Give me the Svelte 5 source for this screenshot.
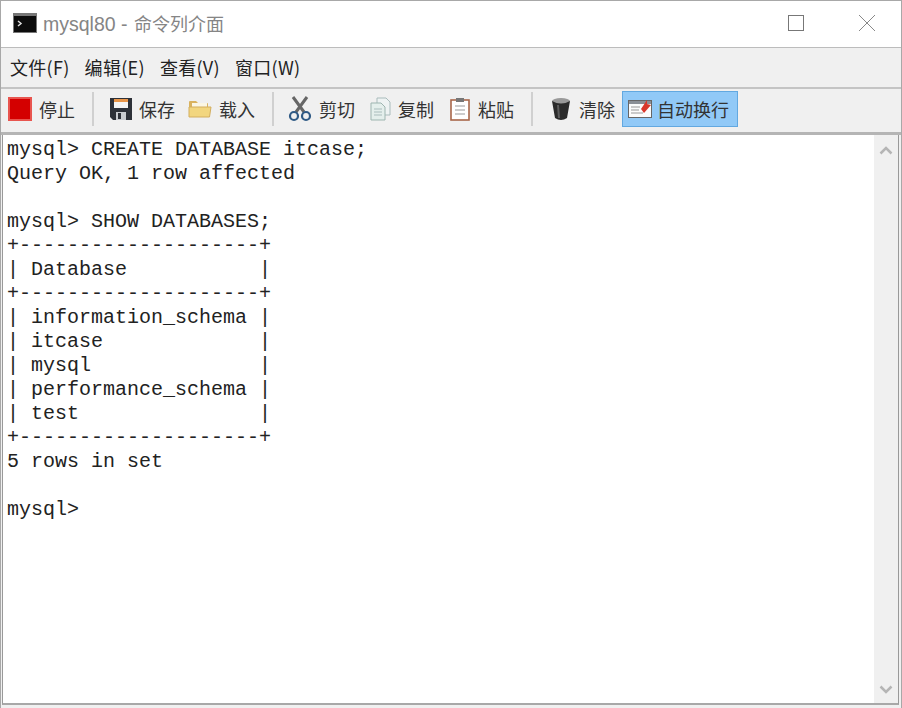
<script lang="ts">
	const menus = ['文件(F)', '编辑(E)', '查看(V)', '窗口(W)'];
	const lines = [
		'mysql> CREATE DATABASE itcase;',
		'Query OK, 1 row affected',
		'',
		'mysql> SHOW DATABASES;',
		'+--------------------+',
		'| Database           |',
		'+--------------------+',
		'| information_schema |',
		'| itcase             |',
		'| mysql              |',
		'| performance_schema |',
		'| test               |',
		'+--------------------+',
		'5 rows in set',
		'',
		'mysql> '
	];
</script>

<div class="window">
	<header class="titlebar">
		<svg class="term" width="24" height="20" viewBox="0 0 24 20">
			<rect width="24" height="20" fill="#777" />
			<rect x="1" y="3" width="22" height="16" fill="#0c0c0c" />
			<path d="M5 8l3 2.500-3 2.500" fill="none" stroke="#ddd" stroke-width="1.500" />
		</svg>
		<span class="title">mysql80 - <span class="cjk">命令列介面</span></span>
		<div class="controls">
			<svg width="16" height="16" viewBox="0 0 16 16"><rect x="0.500" y="0.500" width="15" height="15" fill="none" stroke="#777" /></svg>
			<svg width="16" height="16" viewBox="0 0 16 16"><path d="M0 0l16 16M16 0L0 16" stroke="#888" fill="none" /></svg>
		</div>
	</header>

	<nav class="menubar">
		{#each menus as m}
			<span>{m}</span>
		{/each}
	</nav>

	<div class="toolbar">
		<button class="tool stop">
			<svg width="24" height="24" viewBox="0 0 24 24"><rect x="1" y="1" width="22" height="22" fill="#d40000" stroke="#e8554f" stroke-width="2" /></svg>
			停止
		</button>
		<i class="sep"></i>
		<button class="tool save">
			<svg width="22" height="22" viewBox="0 0 22 22">
				<path d="M0 0h22v22H3l-3-3z" fill="#2d3138" />
				<rect x="4" y="1" width="14" height="3" fill="#e8964a" />
				<rect x="4" y="4" width="14" height="6" fill="#f4f4f4" />
				<rect x="6" y="14" width="10" height="8" fill="#c9ccd0" />
				<rect x="8" y="15" width="3" height="6" fill="#2d3138" />
			</svg>
			保存
		</button>
		<button class="tool load">
			<svg width="24" height="20" viewBox="0 0 24 20">
				<path d="M1 18V3q0-1 1-1h6l2 2h9q1 0 1 1v13z" fill="#d9b25f" />
				<path d="M4 4h15v4H4z" fill="#fbf6e4" />
				<path d="M1 18V8h22l-1.500 10z" fill="#f2d67f" stroke="#d3ae5f" />
			</svg>
			载入
		</button>
		<i class="sep"></i>
		<button class="tool cut">
			<svg width="24" height="26" viewBox="0 0 24 26">
				<path d="M19 1L8 16M5 1l11 15" stroke="#666" stroke-width="3" fill="none" />
				<circle cx="6" cy="20" r="4" fill="none" stroke="#2f5a85" stroke-width="2.200" />
				<circle cx="18" cy="20" r="4" fill="none" stroke="#2f5a85" stroke-width="2.200" />
			</svg>
			剪切
		</button>
		<button class="tool copy">
			<svg width="22" height="24" viewBox="0 0 22 24">
				<path d="M7 1h9l4 4v13H7z" fill="#eef3f3" stroke="#a9bcbc" />
				<path d="M1 6h10l4 4v13H1z" fill="#e4efec" stroke="#9db5b0" />
				<path d="M4 12h8M4 15h8M4 18h8" stroke="#a9bcbc" />
			</svg>
			复制
		</button>
		<button class="tool paste">
			<svg width="20" height="24" viewBox="0 0 20 24">
				<rect x="1" y="3" width="18" height="20" fill="#fff" stroke="#a8674a" stroke-width="1.600" />
				<rect x="6" y="1" width="8" height="4" fill="#777" />
				<path d="M5 9h10M5 13h10M5 17h10" stroke="#999" />
			</svg>
			粘贴
		</button>
		<i class="sep"></i>
		<button class="tool clear">
			<svg width="20" height="24" viewBox="0 0 20 24">
				<ellipse cx="10" cy="4" rx="9" ry="3" fill="#999" />
				<path d="M1 4q9 5 18 0l-3 17q-6 4-12 0z" fill="#2b2b2b" />
				<path d="M7 8l1 13" stroke="#5c5c5c" stroke-width="2" />
			</svg>
			清除
		</button>
		<button class="tool active">
			<svg width="24" height="20" viewBox="0 0 24 20">
				<rect x="0.500" y="1.500" width="23" height="17" fill="#fbfbfb" stroke="#666" />
				<rect x="1" y="2" width="22" height="3" fill="#8a8f96" />
				<path d="M3 8h9M3 11h8M3 14h12" stroke="#999" />
				<path d="M13 10l6-9v4l4 1-7 8z" fill="#d8372b" />
			</svg>
			自动换行
		</button>
	</div>

	<div class="console">
		<pre>{lines.join('\n')}</pre>
		<div class="scrollbar">
			<svg width="14" height="9" viewBox="0 0 14 9"><path d="M1.500 7.500L7 2l5.500 5.500" fill="none" stroke="#b5b5b5" stroke-width="2.500" /></svg>
			<svg width="14" height="9" viewBox="0 0 14 9"><path d="M1.500 1.500L7 7l5.500-5.500" fill="none" stroke="#b5b5b5" stroke-width="2.500" /></svg>
		</div>
	</div>
</div>

<style>
	:global(body) {
		margin: 0;
	}

	.window {
		width: 902px;
		height: 708px;
		display: flex;
		flex-direction: column;
		box-sizing: border-box;
		background: #f0f0f0;
		border-left: 1px solid #a8a8a8;
		border-right: 1px solid #a8a8a8;
		border-top: 1px solid #a8a8a8;
		font-family: "Noto Sans CJK SC", "Liberation Sans", sans-serif;
		color: #222;
		overflow: hidden;
	}

	.titlebar {
		height: 47px;
		box-sizing: border-box;
		flex: none;
		display: flex;
		align-items: center;
		background: #fff;
		padding-left: 12px;
		gap: 6px;
		border-bottom: 1px solid #bcbcbc;
	}

	.term {
		margin-top: -3px;
	}

	.title {
		font-family: "Liberation Sans", "Noto Sans CJK SC", sans-serif;
		font-size: 19.500px;
		color: #858585;
		margin-top: -2px;
	}

	.cjk {
		font-size: 18px;
		margin-left: 1px;
	}

	.controls {
		margin-left: auto;
		display: flex;
		align-items: center;
		gap: 55px;
		padding-right: 26px;
		margin-top: -2px;
	}

	.menubar {
		flex: none;
		display: flex;
		align-items: center;
		gap: 15px;
		padding: 0 0 2px 9px;
		font-size: 18px;
		letter-spacing: 0.3px;
		border-bottom: 2px solid #c4c4c4;
		box-sizing: border-box;
		height: 41px;
	}

	.toolbar {
		height: 46px;
		flex: none;
		display: flex;
		align-items: center;
		padding: 0 0 3px 7px;
		box-sizing: border-box;
		border-bottom: 3px solid #b5b5b5;
	}

	.tool {
		display: flex;
		align-items: center;
		height: 36px;
		padding: 0;
		border: none;
		background: none;
		font: inherit;
		font-size: 18px;
		color: #333;
		white-space: nowrap;
	}

	.stop { gap: 7px; }
	.save { gap: 7px; }
	.load { gap: 7px; margin-left: 13px; }
	.cut { gap: 7px; margin-left: -2px; }
	.copy { gap: 6px; margin-left: 15px; }
	.paste { gap: 8px; margin-left: 16px; }
	.clear { gap: 8px; margin-left: 2px; }

	.tool.active {
		background: #91c9f7;
		border: 1px solid #62a8e0;
		box-sizing: border-box;
		width: 116px;
		padding-left: 5px;
		gap: 5px;
		margin-left: 7px;
	}

	.sep {
		width: 2px;
		height: 34px;
		background: #d0d0d0;
		margin: 0 16px 0 17px;
	}

	.console {
		flex: 1;
		display: flex;
		background: #fff;
		margin: 0 2px 3px 1px;
		border-left: 1px solid #999;
		border-right: 1px solid #999;
		border-bottom: 2px solid #a8a8a8;
		min-height: 0;
	}

	pre {
		flex: 1;
		margin: 0;
		padding: 3px 0 0 4px;
		font-family: "Liberation Mono", monospace;
		font-size: 20px;
		line-height: 24px;
		color: #222;
	}

	.scrollbar {
		width: 24px;
		flex: none;
		background: #f0f0f0;
		display: flex;
		flex-direction: column;
		justify-content: space-between;
		align-items: center;
		padding: 11px 0 9px;
		box-sizing: border-box;
	}
</style>
